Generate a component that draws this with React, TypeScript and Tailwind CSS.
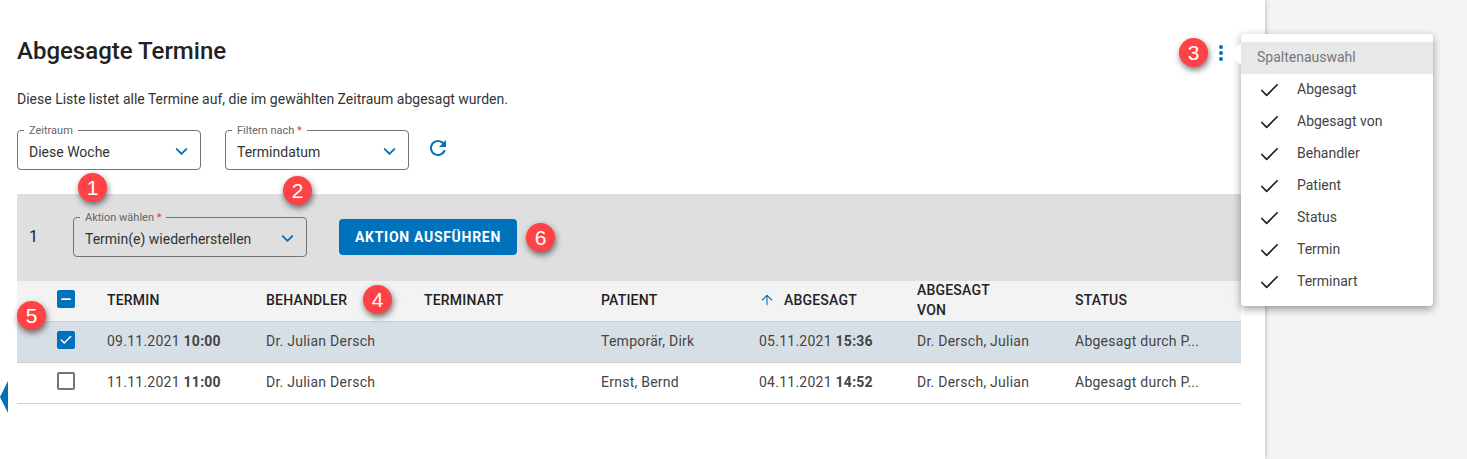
import { ArrowUp, Check, ChevronDown, Minus } from 'lucide-react';

const ROBOTO = "font-['Roboto',sans-serif]";
const COLS = 'grid grid-cols-[90px_159px_158px_177px_158px_158px_158px_166px] items-center';

const spalten = ['Abgesagt', 'Abgesagt von', 'Behandler', 'Patient', 'Status', 'Termin', 'Terminart'];

const zeilen = [
  {
    termin: '09.11.2021',
    zeit: '10:00',
    patient: 'Temporär, Dirk',
    abgesagt: '05.11.2021',
    abgesagtZeit: '15:36',
    aktiv: true,
  },
  {
    termin: '11.11.2021',
    zeit: '11:00',
    patient: 'Ernst, Bernd',
    abgesagt: '04.11.2021',
    abgesagtZeit: '14:52',
    aktiv: false,
  },
];

function Auswahl({
  label,
  wert,
  pflicht,
  className,
}: {
  label: string;
  wert: string;
  pflicht?: boolean;
  className: string;
}) {
  return (
    <div className={`relative flex h-10 items-center justify-between rounded border border-[#757575] pl-[11px] pr-[9px] ${className}`}>
      <span className="absolute -top-[7px] left-[6px] bg-inherit px-[5px] text-[11px] leading-[13px] text-[#666]">
        {label}
        {pflicht && <span className="text-[#e53935]"> *</span>}
      </span>
      <span className="pt-[3px] text-sm text-[#333]">{wert}</span>
      <ChevronDown className="mt-[3px] h-[19px] w-[19px] text-[#0072bc]" strokeWidth={2.4} />
    </div>
  );
}

function Marke({ nr, className }: { nr: number; className: string }) {
  return (
    <div
      className={`absolute flex h-[29px] w-[29px] items-center justify-center rounded-full bg-[#ff4245] text-[21px] text-white shadow-[1px_3px_6px_rgba(0,0,0,0.55)] font-['Liberation_Sans',sans-serif] ${className}`}
    >
      {nr}
    </div>
  );
}

export default function App() {
  return (
    <div className={`relative flex h-[459px] w-[1467px] overflow-hidden bg-[#f4f4f4] ${ROBOTO}`}>
      <main className="h-full w-[1265px] bg-white pl-[17px] pr-[24px] shadow-[0_0_5px_rgba(0,0,0,0.3)]">
        <div className="flex h-[68px] items-end justify-between">
          <h1 className="text-2xl leading-[34px] font-medium text-[#222]">Abgesagte Termine</h1>
        </div>

        <p className="mb-[22px] mt-[22px] text-sm leading-[18px] text-[#333]">
          Diese Liste listet alle Termine auf, die im gewählten Zeitraum abgesagt wurden.
        </p>

        {/* Filter */}
        <div className="flex items-center gap-6">
          <Auswahl label="Zeitraum" wert="Diese Woche" className="w-[184px] bg-white" />
          <Auswahl label="Filtern nach" wert="Termindatum" pflicht className="w-[184px] bg-white" />
          <svg className="-ml-[7px] -mt-[4px] h-6 w-6 text-[#0072bc]" viewBox="0 0 24 24" fill="currentColor">
            <path d="M17.65 6.35C16.2 4.9 14.21 4 12 4c-4.42 0-7.99 3.58-7.99 8s3.57 8 7.99 8c3.73 0 6.84-2.55 7.73-6h-2.08c-.82 2.33-3.04 4-5.65 4-3.31 0-6-2.69-6-6s2.69-6 6-6c1.66 0 3.14.69 4.22 1.78L13 11h7V4l-2.35 2.35z" />
          </svg>
        </div>

        {/* Aktionsleiste */}
        <div className="mt-6 flex h-[87px] items-center bg-[#dfdfdf] pb-[1px] pl-3">
          <span className="w-[44px] text-base text-[#222]">1</span>
          <Auswahl
            label="Aktion wählen"
            wert="Termin(e) wiederherstellen"
            pflicht
            className="w-[234px] bg-[#dfdfdf]"
          />
          <button className="ml-8 h-9 w-[178px] rounded bg-[#0072bc] text-sm font-bold tracking-[0.7px] text-white">
            AKTION AUSFÜHREN
          </button>
        </div>

        {/* Tabelle */}
        <div className={`${COLS} h-[41px] grid-rows-[38px] border-b border-[#cfcfcf] bg-[#f3f3f3] pb-[2px] text-sm font-medium tracking-[0.2px] text-[#222]`}>
          <div className="mb-[2px] flex pl-10">
            <div className="flex h-[18px] w-[18px] items-center justify-center rounded-[2px] bg-[#0072bc]">
              <Minus className="h-[14px] w-[14px] text-white" strokeWidth={3} />
            </div>
          </div>
          <div>TERMIN</div>
          <div>BEHANDLER</div>
          <div>TERMINART</div>
          <div>PATIENT</div>
          <div className="flex items-center gap-[9px]">
            <ArrowUp className="h-4 w-4 text-[#0072bc]" strokeWidth={1.6} />
            ABGESAGT
          </div>
          <div className="w-[80px] leading-[20px]">ABGESAGT VON</div>
          <div>STATUS</div>
        </div>

        {zeilen.map((z) => (
          <div
            key={z.termin}
            className={`${COLS} h-[41px] border-b border-[#cfcfcf] pb-[2px] text-sm tracking-[0.25px] text-[#444] ${z.aktiv ? 'bg-[#d7dfe6]' : 'bg-white'}`}
          >
            <div className="mb-[2px] flex pl-10">
              {z.aktiv ? (
                <div className="flex h-[18px] w-[18px] items-center justify-center rounded-[2px] bg-[#0072bc]">
                  <Check className="h-[14px] w-[14px] text-white" strokeWidth={2.5} />
                </div>
              ) : (
                <div className="h-[18px] w-[18px] rounded-[2px] border-2 border-[#757575]" />
              )}
            </div>
            <div>
              {z.termin} <b className="font-bold">{z.zeit}</b>
            </div>
            <div>Dr. Julian Dersch</div>
            <div />
            <div>{z.patient}</div>
            <div>
              {z.abgesagt} <b className="font-bold">{z.abgesagtZeit}</b>
            </div>
            <div>Dr. Dersch, Julian</div>
            <div>Abgesagt durch P...</div>
          </div>
        ))}
      </main>

      {/* Menü-Punkte */}
      <div className="absolute left-[1219px] top-[45px] flex flex-col gap-[2px]">
        <span className="h-[4px] w-[4px] rounded-full bg-[#0072bc]" />
        <span className="h-[4px] w-[4px] rounded-full bg-[#0072bc]" />
        <span className="h-[4px] w-[4px] rounded-full bg-[#0072bc]" />
      </div>

      {/* Spaltenauswahl */}
      <div className="absolute left-[1241px] top-[34px] h-[272px] w-[192px] rounded bg-white pt-2 shadow-[0_3px_8px_rgba(0,0,0,0.4)]">
        <div className="absolute -left-[13px] top-[9px] h-0 w-0 border-y-[11px] border-r-[13px] border-y-transparent border-r-white" />
        <div className="flex h-8 items-center bg-[#e8e8e8] pb-[2px] pl-4 text-sm text-[#777]">Spaltenauswahl</div>
        {spalten.map((s) => (
          <div key={s} className="flex h-8 items-center text-sm text-[#444]">
            <Check className="ml-[17px] mt-[1px] h-[23px] w-[23px] text-[#222]" strokeWidth={1.8} />
            <span className="mb-[2px] ml-[16px]">{s}</span>
          </div>
        ))}
      </div>

      {/* Pfeil links */}
      <svg className="absolute left-0 top-[381px] h-[32px] w-2" viewBox="0 0 8 32">
        <path d="M0 16 8 0v32z" fill="#0072bc" />
      </svg>

      <Marke nr={1} className="left-[78px] top-[173px]" />
      <Marke nr={2} className="left-[283px] top-[176px]" />
      <Marke nr={3} className="left-[1179px] top-[38px]" />
      <Marke nr={4} className="left-[363px] top-[285px]" />
      <Marke nr={5} className="left-[17px] top-[301px]" />
      <Marke nr={6} className="left-[526px] top-[223px]" />
    </div>
  );
}
